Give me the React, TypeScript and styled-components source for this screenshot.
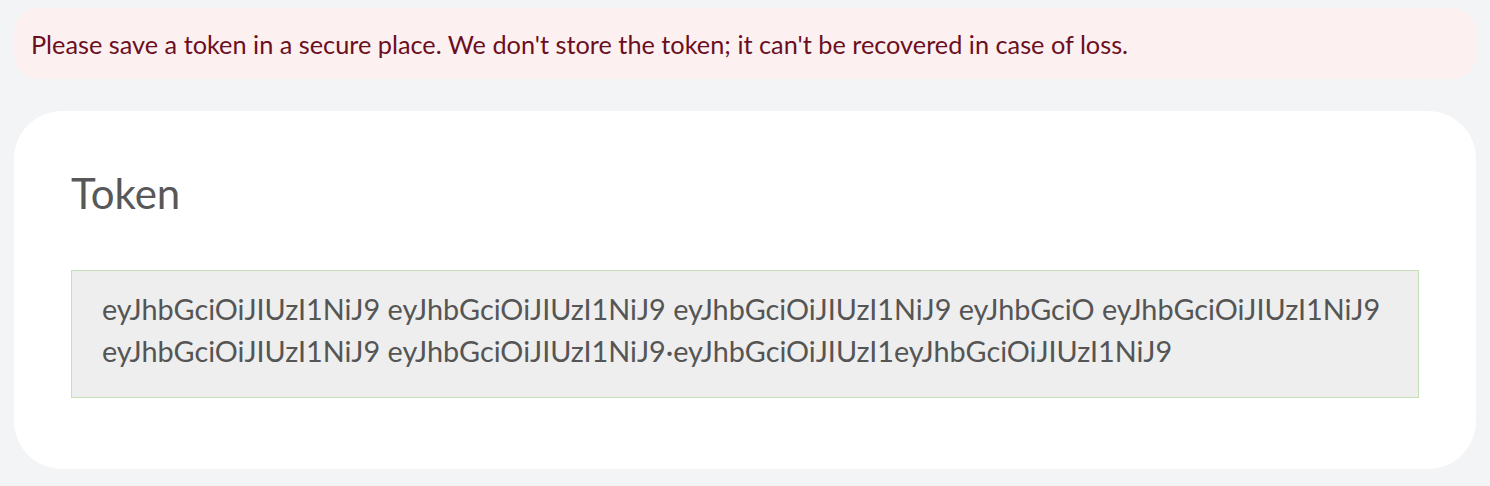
import React from 'react';
import styled, { createGlobalStyle } from 'styled-components';

const GlobalStyle = createGlobalStyle`
  html, body {
    margin: 0;
    padding: 0;
    background-color: #f3f4f6;
  }
  body {
    font-family: Lato, "Liberation Sans", sans-serif;
  }
`;

const Page = styled.div`
  display: flex;
  flex-direction: column;
  gap: 32px;
  padding: 8px 14px 16px;
  min-height: 486px;
  box-sizing: border-box;
`;

const Alert = styled.div`
  background-color: #fdf0f0;
  color: #6b0f1f;
  border-radius: 24px;
  padding: 0 17px;
  height: 71px;
  display: flex;
  align-items: center;
  font-size: 25.3px;
`;

const Card = styled.section`
  background-color: #ffffff;
  border-radius: 48px;
  padding: 56px 57px 71px;
  display: flex;
  flex-direction: column;
  gap: 51px;
`;

const Title = styled.h2`
  margin: 0;
  font-size: 42px;
  font-weight: 400;
  color: #585858;
  line-height: 52px;
`;

const TokenBox = styled.div`
  background-color: #eeeeee;
  border: 1px solid #c5e0b4;
  padding: 17px 30px 25px;
  color: #555555;
  font-size: 28.8px;
  line-height: 42px;
  white-space: pre-line;
`;

const tokenLines = [
  'eyJhbGciOiJIUzI1NiJ9 eyJhbGciOiJIUzI1NiJ9 eyJhbGciOiJIUzI1NiJ9 eyJhbGciO eyJhbGciOiJIUzI1NiJ9',
  'eyJhbGciOiJIUzI1NiJ9 eyJhbGciOiJIUzI1NiJ9·eyJhbGciOiJIUzI1eyJhbGciOiJIUzI1NiJ9',
];

const App: React.FC = () => {
  return (
    <>
      <GlobalStyle />
      <Page>
        <Alert>
          Please save a token in a secure place. We don't store the token; it can't be recovered in case of loss.
        </Alert>
        <Card>
          <Title>Token</Title>
          <TokenBox>{tokenLines.join('\n')}</TokenBox>
        </Card>
      </Page>
    </>
  );
};

export default App;
